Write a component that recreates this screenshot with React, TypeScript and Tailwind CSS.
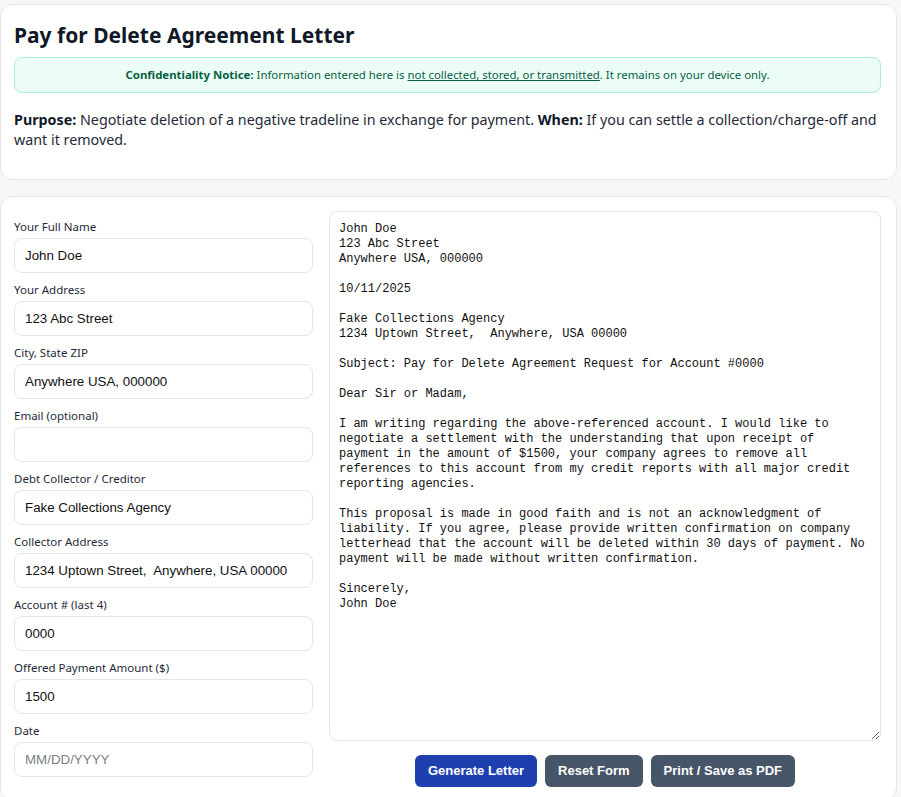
import { useState } from "react";

const ui = "font-['Segoe_UI','Noto_Sans',sans-serif]";

const fields = [
  { label: "Your Full Name", value: "John Doe" },
  { label: "Your Address", value: "123 Abc Street" },
  { label: "City, State ZIP", value: "Anywhere USA, 000000" },
  { label: "Email (optional)", value: "" },
  { label: "Debt Collector / Creditor", value: "Fake Collections Agency" },
  { label: "Collector Address", value: "1234 Uptown Street,  Anywhere, USA 00000" },
  { label: "Account # (last 4)", value: "0000" },
  { label: "Offered Payment Amount ($)", value: "1500" },
  { label: "Date", value: "", placeholder: "MM/DD/YYYY" },
];

const letter = `John Doe
123 Abc Street
Anywhere USA, 000000

10/11/2025

Fake Collections Agency
1234 Uptown Street,  Anywhere, USA 00000

Subject: Pay for Delete Agreement Request for Account #0000

Dear Sir or Madam,

I am writing regarding the above-referenced account. I would like to negotiate a settlement with the understanding that upon receipt of payment in the amount of $1500, your company agrees to remove all references to this account from my credit reports with all major credit reporting agencies.

This proposal is made in good faith and is not an acknowledgment of liability. If you agree, please provide written confirmation on company letterhead that the account will be deleted within 30 days of payment. No payment will be made without written confirmation.

Sincerely,
John Doe`;

function Field({ label, value, placeholder }: { label: string; value: string; placeholder?: string }) {
  const [v, setV] = useState(value);
  return (
    <label className="flex flex-col gap-[3px]">
      <span className={`${ui} text-[11.5px] leading-[16px] text-[#1f2937]`}>{label}</span>
      <input
        value={v}
        placeholder={placeholder}
        onChange={(e) => setV(e.target.value)}
        className="h-[35px] w-full rounded-[8px] border border-[#e3e5e8] bg-white px-[10px] font-['Liberation_Sans',Arial,sans-serif] text-[13.33px] text-[#111] placeholder:text-[#7a7f87] outline-none"
      />
    </label>
  );
}

export default function App() {
  return (
    <div className={`min-h-screen bg-[#f6f7f9] pt-[4px] pr-[4px] ${ui}`}>
      <div className="flex flex-col gap-[16px]">
        <section className="rounded-[12px] border border-[#e5e7eb] bg-white pl-[13px] pr-[15px] pt-[16px] pb-[29px]">
          <h1 className="text-[21px] font-bold leading-[28px] text-[#111827]">Pay for Delete Agreement Letter</h1>
          <div className="mt-[8px] rounded-[8px] border border-[#a7f3d0] bg-[#ecfdf5] py-[8px] text-center text-[11.4px] leading-[18px] text-[#065f46]">
            <b>Confidentiality Notice:</b> Information entered here is{" "}
            <span className="underline">not collected, stored, or transmitted</span>. It remains on your device only.
          </div>
          <p className="mt-[17px] text-[14.3px] leading-[20px] text-[#1f2937]">
            <b className="text-[#111827]">Purpose:</b> Negotiate deletion of a negative tradeline in exchange for payment.{" "}
            <b className="text-[#111827]">When:</b> If you can settle a collection/charge-off and want it removed.
          </p>
        </section>

        <section className="rounded-[12px] border border-[#e5e7eb] bg-white pl-[13px] pr-[15px] pt-[14px] pb-[12px]">
          <div className="grid grid-cols-[299px_1fr] gap-[16px]">
            <div className="flex flex-col gap-[9px] pt-[8px]">
              {fields.map((f) => (
                <Field key={f.label} {...f} />
              ))}
            </div>
            <div className="flex flex-col items-center gap-[14px]">
              <textarea
                defaultValue={letter}
                className="h-[530px] w-full resize-y rounded-[8px] border border-[#e3e5e8] bg-white px-[9px] pt-[10px] pb-[9px] font-['Liberation_Mono','Courier_New',monospace] text-[12px] leading-[15px] text-[#111] outline-none"
              />
              <div className="flex gap-[8px] font-['Liberation_Sans',Arial,sans-serif] text-[13px] font-bold text-white">
                <button className="h-[32px] rounded-[6px] bg-[#1e40af] px-[13px]">Generate Letter</button>
                <button className="h-[32px] rounded-[6px] bg-[#475569] px-[13px]">Reset Form</button>
                <button className="h-[32px] rounded-[6px] bg-[#475569] px-[13px]">Print / Save as PDF</button>
              </div>
            </div>
          </div>
        </section>
      </div>
    </div>
  );
}
